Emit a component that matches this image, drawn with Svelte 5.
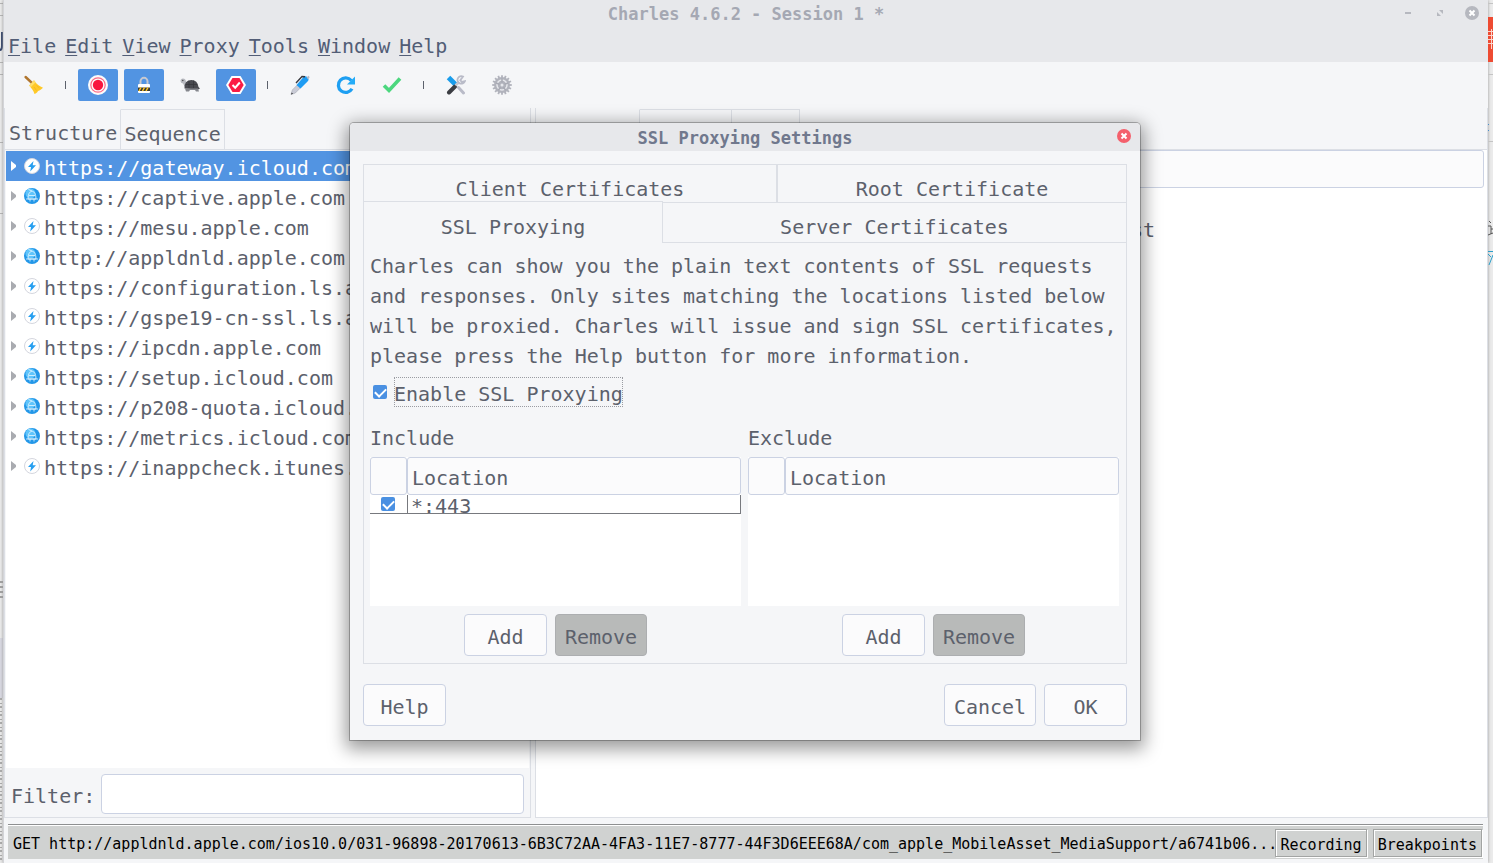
<script>
  const menus = ["File", "Edit", "View", "Proxy", "Tools", "Window", "Help"]

  const hosts = [
    { url: "https://gateway.icloud.com", icon: "bolt" },
    { url: "https://captive.apple.com", icon: "globe" },
    { url: "https://mesu.apple.com", icon: "bolt" },
    { url: "http://appldnld.apple.com", icon: "globe" },
    { url: "https://configuration.ls.apple.com", icon: "bolt" },
    { url: "https://gspe19-cn-ssl.ls.apple.com", icon: "bolt" },
    { url: "https://ipcdn.apple.com", icon: "bolt" },
    { url: "https://setup.icloud.com", icon: "globe" },
    { url: "https://p208-quota.icloud.com", icon: "globe" },
    { url: "https://metrics.icloud.com", icon: "globe" },
    { url: "https://inappcheck.itunes.apple.com", icon: "bolt" },
  ]

  const tools = [
    { id: "clear", label: "Clear session" },
    { id: "sep" },
    { id: "record", label: "Recording", on: true },
    { id: "lock", label: "SSL proxying", on: true },
    { id: "turtle", label: "Throttling" },
    { id: "breakpoint", label: "Breakpoints", on: true },
    { id: "sep" },
    { id: "pen", label: "Compose" },
    { id: "repeat", label: "Repeat" },
    { id: "check", label: "Validate" },
    { id: "sep" },
    { id: "tools", label: "Tools" },
    { id: "gear", label: "Settings" },
  ]

  const teeth = Array.from({ length: 16 }, (_, i) => i * 22.5)

  let selected = 0
  let sslEnabled = true
  let lists = [
    { title: "Include", rows: [{ enabled: true, location: "*:443" }] },
    { title: "Exclude", rows: [] },
  ]
</script>

<div class="desktop">
  <svg class="behind-left" viewBox="0 0 3 863" aria-hidden="true">
    <path d="M0 3.5h3M0 15.5h3M0 62.5h3M0 74.5h3M0 142.5h3M0 213.5h3M0 638.5h3" stroke="#b4b4b4" />
    <path d="M0 50q2 0 2-4V32" stroke="#2c3e66" stroke-width="2" fill="none" />
    <path d="M0 582h3M0 587h3M0 592h3M0 597h3" stroke="#555" />
    <rect y="638" width="3" height="60" fill="#d9d9e2" />
    <path d="M1 698v165" stroke="#aaa" stroke-width="2" stroke-dasharray="2 3 1 2" />
  </svg>

  <div class="window">
    <header>
      <div class="titlebar">
        <h1>Charles 4.6.2 - Session 1 *</h1>
        <div class="controls">
          <button aria-label="Minimize">
            <svg width="14" height="14"><path d="M4 7h6" stroke="#b6b8bf" stroke-width="2" /></svg>
          </button>
          <button aria-label="Maximize">
            <svg width="14" height="14" fill="#b6b8bf"><path d="M6 4h4v4zM4 6v4h4z" /></svg>
          </button>
          <button aria-label="Close">
            <svg width="14" height="14">
              <circle cx="7" cy="7" r="7" fill="#b6b8bf" />
              <path d="M4.5 4.5l5 5m0-5l-5 5" stroke="#fff" stroke-width="2" />
            </svg>
          </button>
        </div>
      </div>
      <nav>
        {#each menus as menu}
          <button><u>{menu[0]}</u>{menu.slice(1)}</button>
        {/each}
      </nav>
    </header>

    <div class="toolbar">
      {#each tools as tool}
        {#if tool.id === "sep"}
          <span class="sep"></span>
        {:else}
          <button class:on={tool.on} aria-label={tool.label}>
            <svg width="20" height="20" viewBox="0 0 20 20">
              {#if tool.id === "clear"}
                <path d="M1.6 2l6.4 6" stroke="#b0762f" stroke-width="2.4" stroke-linecap="round" />
                <path d="M10 5.2L5.2 10.4c2 2.6 4.6 5.2 5.3 8.600 1.8-.6 2.900-1.500 3.500-3 1.800-.8 3.600-1.800 5-3.300-3.200-1.300-6.600-3.500-9-7.500z" fill="#ffc928" />
                <path d="M10 5.200L5.200 10.400l1.500 1.800 5-5z" fill="#ffdf6b" />
                <path d="M10 12l2.500 3.500M12.500 10.500l3 2.500" stroke="#f2b41e" stroke-width=".8" />
              {:else if tool.id === "record"}
                <circle cx="10" cy="10" r="10" fill="#fbfbfb" />
                <circle cx="10" cy="10" r="7.200" fill="none" stroke="#ff6a85" stroke-width="1.200" />
                <circle cx="10" cy="10" r="5.200" fill="#f9163e" />
              {:else if tool.id === "lock"}
                <path d="M6.500 10V6.500a3.500 3.700 0 0 1 7 0V10" fill="none" stroke="#c6c8d0" stroke-width="2" />
                <rect x="4" y="9" width="12" height="9" rx="1" fill="#fff" />
                <rect x="4" y="12.500" width="12" height="3.500" fill="#3a3834" />
                <path d="M5 16l2-3.500M8.500 16l2-3.500M12 16l2-3.500" stroke="#ffc61c" stroke-width="1.500" />
              {:else if tool.id === "turtle"}
                <path d="M.5 6q0-2.500 2.500-2.500T6 6.500L8 11l-3 1-2-3.500Q.5 8 .5 6z" fill="#b8bac0" />
                <circle cx="2.800" cy="5.500" r=".7" fill="#444" />
                <path d="M4.500 13.500Q4 5 11.500 5q6 0 7 7l1.500 1.500-2 1z" fill="#4a4b51" />
                <path d="M5 13.500h13l1 3h-3l-1-1.500h-5l-1 1.500H6z" fill="#85878d" />
                <path d="M6 9.500h11M9 6v7M13.500 5.500V13" stroke="#37383d" stroke-width=".8" />
              {:else if tool.id === "breakpoint"}
                <path d="M5.500 1h9L20 10l-5.500 9h-9L0 10z" fill="#fff" />
                <path d="M6.500 3h7l4.200 7-4.200 7h-7L2.300 10z" fill="#fb1c45" />
                <path d="M6.500 10l2.700 2.700 4.600-5.200" fill="none" stroke="#fff" stroke-width="2" />
              {:else if tool.id === "pen"}
                <path d="M1 19.500l1.300-4.500 5-5 3 3-5 5z" fill="#c9cbd6" stroke="#a4a6b2" stroke-width=".6" />
                <path d="M1 19.500l.8-2 1.200 1.200z" fill="#333" />
                <path d="M6.500 10l7-8q2-1.500 4 .3t.3 4L10.500 13.500z" fill="#1e9cf3" />
                <path d="M6 8l6-6.500 3 .3" fill="none" stroke="#38393f" stroke-width="1.400" />
                <path d="M16.500 2.500L18.500.8l1.200 1.400-1.700 2z" fill="#b8bac6" />
              {:else if tool.id === "repeat"}
                <path d="M16 13.800A7.300 7.300 0 1 1 15.300 5.500" fill="none" stroke="#1e9ff2" stroke-width="3.300" />
                <path d="M19 1.500V9.500H11z" fill="#24acf8" />
              {:else if tool.id === "check"}
                <path d="M2 10.500l5 5L18 3.500" fill="none" stroke="#4bd77e" stroke-width="3.600" />
              {:else if tool.id === "tools"}
                <path d="M2.500 2.500L10.500 10.500" stroke="#199ceb" stroke-width="5" />
                <path d="M12.500 12.500l5 5.500" stroke="#b9bbc8" stroke-width="3" stroke-linecap="round" />
                <path d="M3 17.500L9 11.500" stroke="#3b3d43" stroke-width="4" stroke-linecap="round" />
                <path d="M9.500 10.500l3.500-3.500" stroke="#c4c6d0" stroke-width="2.500" />
                <path d="M17 1.500a3.800 3.800 0 1 0 1.800 4.800l-3 .7-1.500-1.800z" fill="none" stroke="#b9bbc8" stroke-width="1.800" />
              {:else}
                {#each teeth as angle}
                  <path d="M10 .2v3" stroke="#b1b3bc" stroke-width="1.800" transform="rotate({angle} 10 10)" />
                {/each}
                <circle cx="10" cy="10" r="8" fill="#b1b3bc" />
                <circle cx="10" cy="10" r="5" fill="none" stroke="#e6e7ec" stroke-width="1.500" />
                <circle cx="10" cy="10" r="1.500" fill="#e6e7ec" />
                <path d="M10 3.500v4M4 8l3.500 1.200M16 8l-3.500 1.200M6.300 15.200l2.300-3M13.700 15.200l-2.300-3" stroke="#a8aab4" stroke-width="1.500" />
              {/if}
            </svg>
          </button>
        {/if}
      {/each}
    </div>

    <main>
      <section class="sessions">
        <div class="tabs">
          <button class="tab current">Structure</button>
          <button class="tab">Sequence</button>
        </div>
        <ul>
          {#each hosts as host, i}
            <li>
              <button class="host" class:selected={selected === i} on:click={() => (selected = i)}>
                <svg width="6" height="10" viewBox="0 0 6 10"><path d="M0 0l5 4v2l-5 4z" fill="currentColor" /></svg>
                <svg width="16" height="16" viewBox="0 0 16 16">
                  {#if host.icon === "bolt"}
                    <circle cx="8" cy="8" r="7.500" fill="#fff" stroke="#d4d6de" />
                    <path d="M9.500 3L4 9h3l-.8 4.500L12 7.200H8.700z" fill="#279ff0" />
                  {:else}
                    <circle cx="8" cy="8" r="8" fill="#2397e8" />
                    <circle cx="6.500" cy="5.500" r="5" fill="#5fc4fb" />
                    <path d="M4 11Q4 4 8 3q4 1 4 8zM2 11h12M8 3L4.500 1.500M5 7.500h6M6 11v2.500M10 11v2.500" fill="none" stroke="#e8f7ff" stroke-width=".8" />
                  {/if}
                </svg>
                <span>{host.url}</span>
              </button>
            </li>
          {/each}
        </ul>
        <div class="filter">
          <label for="filter">Filter:</label>
          <input id="filter" type="text" />
        </div>
      </section>

      <section class="details">
        <div class="tabs">
          <button class="tab overview-tab" aria-label="Overview"></button>
          <button class="tab summary-tab" aria-label="Summary"></button>
          <button class="tab chart-tab" aria-label="Chart"></button>
        </div>
        <div class="overview">
          <div class="column-head"></div>
          <p>st</p>
        </div>
      </section>
    </main>

    <footer>
      <span class="request">GET http://appldnld.apple.com/ios10.0/031-96898-20170613-6B3C72AA-4FA3-11E7-8777-44F3D6EEE68A/com_apple_MobileAsset_MediaSupport/a6741b06...</span>
      <div class="states">
        <button>Recording</button>
        <button>Breakpoints</button>
      </div>
    </footer>
  </div>

  <svg class="behind-right" viewBox="0 0 5 863" aria-hidden="true">
    <rect y="17" width="5" height="45" fill="#ee4b32" />
    <path d="M0 31.500h5M0 35.500h5M0 39.500h5M0 43.500h5M3.500 29v20" stroke="#fbd5cc" />
    <path d="M0 3.500h5M0 74.500h5M0 141.500h5" stroke="#c4c4c4" />
    <path d="M0 124.500h1M0 130.500h1" stroke="#4a8fc9" />
    <path d="M1 221l2 2M0 226h3v8M3 229h2M0 235l5-2" stroke="#555" fill="none" />
    <path d="M0 251.500h5M0 254l3 3M5 255l-4 10" stroke="#2b9fca" fill="none" />
  </svg>

  <div class="dialog" role="dialog" aria-labelledby="dialog-title">
    <div class="titlebar">
      <h2 id="dialog-title">SSL Proxying Settings</h2>
      <div class="controls">
        <button aria-label="Close dialog">
          <svg width="14" height="14">
            <circle cx="7" cy="7" r="7" fill="#f4606c" />
            <path d="M4.500 4.500l5 5m0-5l-5 5" stroke="#fff" stroke-width="2" />
          </svg>
        </button>
      </div>
    </div>

    <div class="panel">
      <div class="settings-tabs back">
        <button>Client Certificates</button>
        <button>Root Certificate</button>
      </div>
      <div class="settings-tabs front">
        <button class="current">SSL Proxying</button>
        <button>Server Certificates</button>
      </div>

      <div class="content">
        <p>
          Charles can show you the plain text contents of SSL requests and responses. Only sites
          matching the locations listed below will be proxied. Charles will issue and sign SSL
          certificates, please press the Help button for more information.
        </p>
        <label class="enable">
          <input type="checkbox" bind:checked={sslEnabled} />
          <span>Enable SSL Proxying</span>
        </label>

        <div class="lists">
          {#each lists as list}
            <section>
              <h3>{list.title}</h3>
              <div class="table-box">
                <table>
                  <thead>
                    <tr><th class="tick" aria-label="Enabled"></th><th>Location</th></tr>
                  </thead>
                  <tbody>
                    {#each list.rows as row}
                      <tr>
                        <td class="tick"><input type="checkbox" aria-label={row.location} bind:checked={row.enabled} /></td>
                        <td class="location"><div>{row.location}</div></td>
                      </tr>
                    {/each}
                  </tbody>
                </table>
              </div>
              <div class="actions">
                <button class="btn">Add</button>
                <button class="btn wide" disabled>Remove</button>
              </div>
            </section>
          {/each}
        </div>
      </div>
    </div>

    <div class="dialog-buttons">
      <button class="btn help">Help</button>
      <button class="btn wide">Cancel</button>
      <button class="btn">OK</button>
    </div>
  </div>
</div>

<style>
  :global(body) {
    background: #ebebeb;
  }

  .desktop {
    position: relative;
    display: flex;
    height: 100vh;
    overflow: hidden;
    font: 20px/30px "DejaVu Sans Mono", monospace;
    color: #5c616c;
  }

  .desktop * {
    box-sizing: border-box;
  }

  .behind-left {
    width: 3px;
    flex: none;
  }

  .behind-right {
    width: 5px;
    flex: none;
  }

  button,
  input {
    font: inherit;
    color: inherit;
  }

  button {
    margin: 0;
    padding: 0;
    border: 0;
    background: none;
    white-space: nowrap;
  }

  h1,
  h2,
  h3,
  p,
  ul {
    margin: 0;
    padding: 0;
    font-weight: normal;
  }

  .window {
    flex: 1;
    min-width: 0;
    display: flex;
    flex-direction: column;
    background: #f5f6f8;
    border-left: 1px solid #d3d4d8;
    box-shadow: 0 0 3px #999;
  }

  header,
  .titlebar {
    background: #e7e8eb;
  }

  .titlebar {
    position: relative;
    height: 28px;
    display: flex;
    justify-content: center;
    align-items: center;
  }

  .titlebar h1,
  .titlebar h2 {
    font-size: 17px;
    font-weight: bold;
    line-height: 28px;
    color: #a5a8b3;
  }

  .controls {
    position: absolute;
    right: 9px;
    top: 0;
    height: 26px;
    display: flex;
    align-items: center;
    gap: 18px;
  }

  .controls button,
  .controls svg {
    display: block;
  }

  nav {
    display: flex;
    gap: 9px;
    height: 34px;
    padding: 2px 4px 0;
    color: #525d76;
  }

  nav u {
    text-underline-offset: 2px;
    text-decoration-thickness: 1px;
  }

  .toolbar {
    display: flex;
    align-items: center;
    gap: 6px;
    height: 46px;
    padding: 0 10px;
    flex: none;
  }

  .toolbar button {
    display: flex;
    align-items: center;
    justify-content: center;
    width: 40px;
    height: 32px;
    border-radius: 2px;
  }

  .toolbar svg {
    fill: none;
  }

  .toolbar .on {
    background: #5294e2;
  }

  .sep {
    width: 12px;
    height: 8px;
    background: linear-gradient(#5c616c, #5c616c) 5px 0 / 1px 8px no-repeat;
  }

  main {
    flex: 1;
    min-height: 0;
    display: flex;
    gap: 4px;
    padding-bottom: 6px;
  }

  .sessions {
    width: 527px;
    flex: none;
    display: flex;
    flex-direction: column;
    border: 1px solid #dcdfe5;
    border-top: 0;
  }

  .tabs {
    display: flex;
    height: 42px;
    flex: none;
    padding-top: 1px;
    border-bottom: 1px solid #dcdfe5;
  }

  .tab {
    padding: 8px 3px 0;
    height: 41px;
    border: 1px solid #dcdfe5;
    border-left: 0;
  }

  .tab.current {
    padding: 6px 3px 0 4px;
    border-top-color: transparent;
    border-bottom: 0;
  }

  .overview-tab {
    width: 104px;
    border-top-color: transparent;
    border-bottom: 0;
  }

  .summary-tab {
    width: 92px;
  }

  .chart-tab {
    width: 68px;
  }

  ul {
    flex: 1;
    min-height: 0;
    margin: 1px 1px 0;
    list-style: none;
    overflow: hidden;
    background: #fff;
  }

  .host {
    display: flex;
    align-items: center;
    width: 100%;
    height: 30px;
    padding-left: 5px;
  }

  .host svg {
    flex: none;
    margin-right: 7px;
    color: #a9abb0;
  }

  .host svg + svg {
    margin-right: 4px;
  }

  .host span {
    padding-top: 4px;
  }

  .host.selected,
  .host.selected svg {
    color: #fff;
  }

  .host.selected {
    background: #5294e2;
  }

  .filter {
    display: flex;
    align-items: center;
    gap: 6px;
    height: 49px;
    flex: none;
    padding: 2px 6px 0;
  }

  .filter label {
    padding-top: 4px;
  }

  .filter input {
    flex: 1;
    min-width: 0;
    height: 40px;
    padding: 0 6px;
    border: 1px solid #cbd2e3;
    border-radius: 4px;
    background: #fff;
  }

  .details {
    flex: 1;
    min-width: 0;
    display: flex;
    flex-direction: column;
    border: 1px solid #dcdfe5;
    border-top: 0;
  }

  .overview {
    flex: 1;
    background: #fff;
  }

  .column-head {
    height: 38px;
    margin-right: 3px;
    border: 1px solid #cbd2e3;
    border-radius: 3px;
    background: #fbfbfc;
  }

  .overview p {
    margin-top: 27px;
    padding-left: 595px;
  }

  footer {
    display: flex;
    align-items: center;
    height: 35px;
    flex: none;
    margin: 0 5px 4px 4px;
    padding: 0 1px 0 5px;
    border-top: 1px solid #8e9091;
    background: #d0d2d1;
    box-shadow: inset 0 1px #fff;
    font-size: 15px;
    color: #000;
  }

  .request {
    flex: 1;
    min-width: 0;
    padding-top: 4px;
    overflow: hidden;
    white-space: nowrap;
  }

  .states {
    display: flex;
    gap: 6px;
    padding-top: 2px;
  }

  .states button {
    height: 28px;
    padding: 0 4px;
    border: 1px solid #a2a4a3;
    box-shadow: inset 1px 1px #fff, 1px 1px #fff;
  }

  .dialog {
    position: absolute;
    top: 123px;
    left: 350px;
    width: 790px;
    border-radius: 4px 4px 0 0;
    background: #f5f6f8;
    box-shadow: 0 0 0 1px rgba(0, 0, 0, 0.25), 0 5px 18px 4px rgba(0, 0, 0, 0.4);
  }

  .dialog .titlebar {
    border-radius: 4px 4px 0 0;
  }

  .dialog .titlebar h2 {
    padding-top: 2px;
    color: #70788d;
  }

  .panel {
    margin: 13px 13px 0;
    border: 1px solid #dcdfe5;
  }

  .settings-tabs {
    display: grid;
  }

  .settings-tabs button {
    height: 40px;
    padding-top: 9px;
    border-bottom: 1px solid #dcdfe5;
  }

  .back {
    grid-template-columns: 412fr 350fr;
  }

  .back button {
    height: 38px;
  }

  .back button + button {
    border-left: 2px solid #dcdfe5;
  }

  .front {
    grid-template-columns: 299fr 463fr;
  }

  .settings-tabs .current {
    height: 42px;
    margin-top: -2px;
    background: #f5f6f8;
    border: solid #dcdfe5;
    border-width: 1px 1px 0 0;
  }

  .content {
    padding: 8px 7px 7px 6px;
  }

  .enable {
    display: flex;
    align-items: center;
    gap: 7px;
    height: 30px;
    margin: 6px 0 0 3px;
  }

  .enable span {
    height: 30px;
    padding-top: 2px;
    outline: 1px dotted #9a9ca2;
    outline-offset: -1px;
  }

  input[type="checkbox"] {
    appearance: none;
    display: block;
    width: 14px;
    height: 14px;
    margin: 0;
    border: 1px solid #b5bccb;
    border-radius: 2px;
    background: #fff;
  }

  input[type="checkbox"]:checked {
    display: grid;
    place-items: start center;
    padding-top: 3px;
    border: 0;
    background: #4a90e2;
  }

  input[type="checkbox"]:checked::before {
    content: "";
    width: 9px;
    height: 5px;
    border: solid #fff;
    border-width: 0 0 2px 2px;
    transform: rotate(-45deg);
  }

  .lists {
    display: grid;
    grid-template-columns: 1fr 1fr;
    gap: 7px;
    margin-top: 16px;
  }

  h3 {
    font-size: 20px;
  }

  .table-box {
    height: 149px;
    margin-top: 4px;
    background: #fff;
  }

  table {
    width: 100%;
    table-layout: fixed;
    border-collapse: separate;
    border-spacing: 0;
  }

  th {
    height: 38px;
    padding: 4px 4px 0;
    border: 1px solid #cbd2e3;
    border-radius: 3px;
    background: #fbfbfc;
    font-weight: normal;
    text-align: left;
    line-height: 30px;
  }

  th.tick {
    width: 37px;
  }

  td {
    padding: 0;
    border-bottom: 1px solid #77797e;
    vertical-align: top;
  }

  td.tick input {
    margin: 2px 0 0 11px;
  }

  .location {
    border-left: 1px solid #77797e;
    border-right: 1px solid #77797e;
  }

  .location div {
    height: 18px;
    padding-left: 3px;
    line-height: 22px;
    overflow: hidden;
  }

  .actions {
    display: flex;
    justify-content: center;
    gap: 8px;
    margin-top: 8px;
  }

  .btn {
    width: 83px;
    height: 42px;
    padding-top: 4px;
    border: 1px solid #cbd2e3;
    border-radius: 4px;
    background: #fbfbfc;
  }

  .btn.wide {
    width: 92px;
  }

  .btn:disabled {
    border-color: #acaeb0;
    background: #b8bab9;
  }

  .dialog-buttons {
    display: flex;
    gap: 8px;
    padding: 20px 13px 14px;
  }

  .help {
    margin-right: auto;
  }
</style>
